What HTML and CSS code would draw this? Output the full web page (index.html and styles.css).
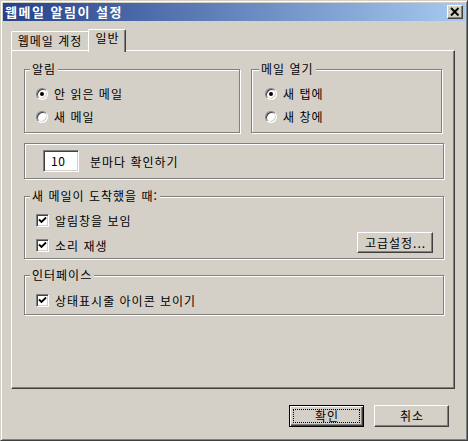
FILE: index.html
```html
<!DOCTYPE html>
<html lang="ko">
<head>
<meta charset="utf-8">
<title>웹메일 알림이 설정</title>
<link rel="stylesheet" href="styles.css">
</head>
<body>
<div class="window">
  <div class="titlebar">
    <span class="title">웹메일 알림이 설정</span>
    <span class="close">
      <svg width="16" height="14" viewBox="0 0 16 14"><path d="M4 3 L11.5 10.5 M11.5 3 L4 10.5" stroke="#000" stroke-width="1.9" fill="none"/></svg>
    </span>
  </div>
  <div class="tabs">
    <div class="tab">웹메일 계정</div>
    <div class="tab active">일반</div>
  </div>
  <div class="panel">
    <div class="row1">
      <div class="group g-alert">
        <span class="glabel">알림</span>
        <div class="opt"><span class="radio on"></span>안 읽은 메일</div>
        <div class="opt"><span class="radio"></span>새 메일</div>
      </div>
      <div class="group g-open">
        <span class="glabel">메일 열기</span>
        <div class="opt"><span class="radio on"></span>새 탭에</div>
        <div class="opt"><span class="radio"></span>새 창에</div>
      </div>
    </div>
    <div class="group g-interval">
      <span class="textbox">10</span>
      <span class="interval-text">분마다 확인하기</span>
    </div>
    <div class="group g-new">
      <span class="glabel">새 메일이 도착했을 때:</span>
      <div class="opt"><span class="check"><svg width="11" height="11" viewBox="0 0 11 11"><path d="M2 4.5 L4.5 7 L9 2.5" stroke="#000" stroke-width="1.8" fill="none"/></svg></span>알림창을 보임</div>
      <div class="opt row-btn">
        <span class="opt-inner"><span class="check"><svg width="11" height="11" viewBox="0 0 11 11"><path d="M2 4.5 L4.5 7 L9 2.5" stroke="#000" stroke-width="1.8" fill="none"/></svg></span>소리 재생</span>
        <button class="btn btn-adv">고급설정...</button>
      </div>
    </div>
    <div class="group g-ui">
      <span class="glabel">인터페이스</span>
      <div class="opt"><span class="check"><svg width="11" height="11" viewBox="0 0 11 11"><path d="M2 4.5 L4.5 7 L9 2.5" stroke="#000" stroke-width="1.8" fill="none"/></svg></span>상태표시줄 아이콘 보이기</div>
    </div>
  </div>
  <div class="buttons">
    <button class="btn default">확인</button>
    <button class="btn">취소</button>
  </div>
</div>
</body>
</html>
```
FILE: styles.css
```css
html, body {
  margin: 0;
  padding: 0;
  background: #d4d0c8;
}
.window {
  width: 468px;
  height: 441px;
  box-sizing: border-box;
  background: #d4d0c8;
  border: 1px solid;
  border-color: #d4d0c8 #404040 #404040 #d4d0c8;
  box-shadow: inset 1px 1px 0 #fff, inset -1px -1px 0 #808080;
  padding: 2px;
  font-family: "Noto Sans CJK KR", "Liberation Sans", sans-serif;
  font-size: 12px;
  letter-spacing: 1px;
  color: #000;
}
.titlebar {
  height: 18px;
  display: flex;
  align-items: center;
  justify-content: space-between;
  background: linear-gradient(to right, #25418a, #a6caf0);
  padding: 0 2px 0 2px;
}
.title {
  color: #fff;
  font-weight: bold;
  font-size: 13px;
  letter-spacing: 1.5px;
  line-height: 18px;
}
.close {
  width: 16px;
  height: 14px;
  box-sizing: border-box;
  background: #d4d0c8;
  border: 1px solid;
  border-color: #fff #404040 #404040 #fff;
  box-shadow: inset -1px -1px 0 #808080;
  display: flex;
  align-items: center;
  justify-content: center;
  position: relative;
}
.close svg {
  position: absolute;
  left: -1px;
  top: -1px;
}
.tabs {
  display: flex;
  align-items: flex-end;
  margin: 8px 0 0 8px;
  height: 21px;
}
.tab {
  box-sizing: border-box;
  height: 19px;
  width: 79px;
  border-top: 1px solid #fff;
  border-left: 1px solid #fff;
  border-right: 1px solid #404040;
  box-shadow: inset -1px 0 0 #808080;
  border-top-left-radius: 2px;
  border-top-right-radius: 2px;
  background: #d4d0c8;
  text-align: center;
  line-height: 18px;
  padding-right: 1px;
}
.tab.active {
  position: relative;
  z-index: 2;
  width: 38px;
  height: 23px;
  margin-left: -2px;
  margin-bottom: -2px;
  line-height: 16px;
  padding-right: 0;
  padding-left: 1px;
}
.panel {
  box-sizing: border-box;
  width: 444px;
  height: 339px;
  margin-left: 8px;
  border: 1px solid;
  border-color: #fff #404040 #404040 #fff;
  box-shadow: inset -1px -1px 0 #808080;
  padding: 18px 10px 0 12px;
  display: flex;
  flex-direction: column;
}
.row1 {
  display: flex;
  gap: 11px;
}
.group {
  position: relative;
  box-sizing: border-box;
  border: 1px solid #808080;
  box-shadow: inset 1px 1px 0 #fff, 1px 1px 0 #fff;
}
.glabel {
  position: absolute;
  left: 5px;
  top: -8px;
  line-height: 14px;
  padding: 0 2px;
  background: #d4d0c8;
}
.g-alert {
  width: 216px;
  height: 64px;
  padding: 17px 0 0 11px;
  display: flex;
  flex-direction: column;
  gap: 10px;
}
.g-open {
  width: 191px;
  height: 64px;
  padding: 17px 0 0 13px;
  display: flex;
  flex-direction: column;
  gap: 10px;
}
.g-open .glabel {
  left: 7px;
}
.opt {
  display: flex;
  align-items: center;
  height: 13px;
  line-height: 13px;
  white-space: nowrap;
}
.radio {
  position: relative;
  width: 12px;
  height: 12px;
  box-sizing: border-box;
  border-radius: 50%;
  border: 1px solid;
  border-color: #808080 #fff #fff #808080;
  box-shadow: inset 1px 1px 0 #404040, inset -1px -1px 0 #d4d0c8;
  background: #fff;
  margin-right: 6px;
  flex: none;
}
.radio.on::after {
  content: "";
  position: absolute;
  left: 3px;
  top: 3px;
  width: 4px;
  height: 4px;
  border-radius: 50%;
  background: #000;
}
.check {
  width: 13px;
  height: 13px;
  box-sizing: border-box;
  border: 1px solid;
  border-color: #808080 #fff #fff #808080;
  box-shadow: inset 1px 1px 0 #404040, inset -1px -1px 0 #d4d0c8;
  background: #fff;
  margin-right: 6px;
  display: flex;
  align-items: center;
  justify-content: center;
  flex: none;
}
.g-interval {
  margin-top: 10px;
  height: 36px;
  display: flex;
  align-items: center;
  padding-left: 18px;
}
.textbox {
  box-sizing: border-box;
  width: 36px;
  height: 22px;
  border: 1px solid;
  border-color: #808080 #fff #fff #808080;
  box-shadow: inset 1px 1px 0 #404040, inset -1px -1px 0 #d4d0c8;
  background: #fff;
  padding-left: 7px;
  line-height: 20px;
  letter-spacing: 0.5px;
}
.interval-text {
  margin-left: 11px;
}
.g-new {
  margin-top: 17px;
  height: 63px;
  padding: 17px 10px 0 11px;
  display: flex;
  flex-direction: column;
  gap: 5px;
}
.row-btn {
  height: 21px;
  align-items: flex-end;
  justify-content: space-between;
}
.opt-inner {
  display: flex;
  align-items: center;
  margin-bottom: 1px;
}
.g-ui {
  margin-top: 16px;
  height: 40px;
  padding: 18px 0 0 11px;
}
.btn {
  box-sizing: border-box;
  width: 75px;
  height: 22px;
  background: #d4d0c8;
  border: 1px solid;
  border-color: #fff #404040 #404040 #fff;
  box-shadow: inset -1px -1px 0 #808080;
  font-family: "Noto Sans CJK KR", "Liberation Sans", sans-serif;
  font-size: 12px;
  letter-spacing: 1px;
  color: #000;
  padding: 0 0 0 1px;
  margin: 0;
  line-height: 18px;
}
.btn-adv {
  width: 76px;
  height: 21px;
}
.buttons {
  display: flex;
  justify-content: flex-end;
  gap: 10px;
  margin-top: 16px;
  padding-right: 16px;
}
.btn.default {
  position: relative;
  border: 1px solid #000;
  box-shadow: inset 1px 1px 0 #fff, inset -1px -1px 0 #404040, inset -2px -2px 0 #808080;
}
.btn.default::after {
  content: "";
  position: absolute;
  left: 3px;
  top: 3px;
  right: 3px;
  bottom: 3px;
  border: 1px dotted #000;
}
```
